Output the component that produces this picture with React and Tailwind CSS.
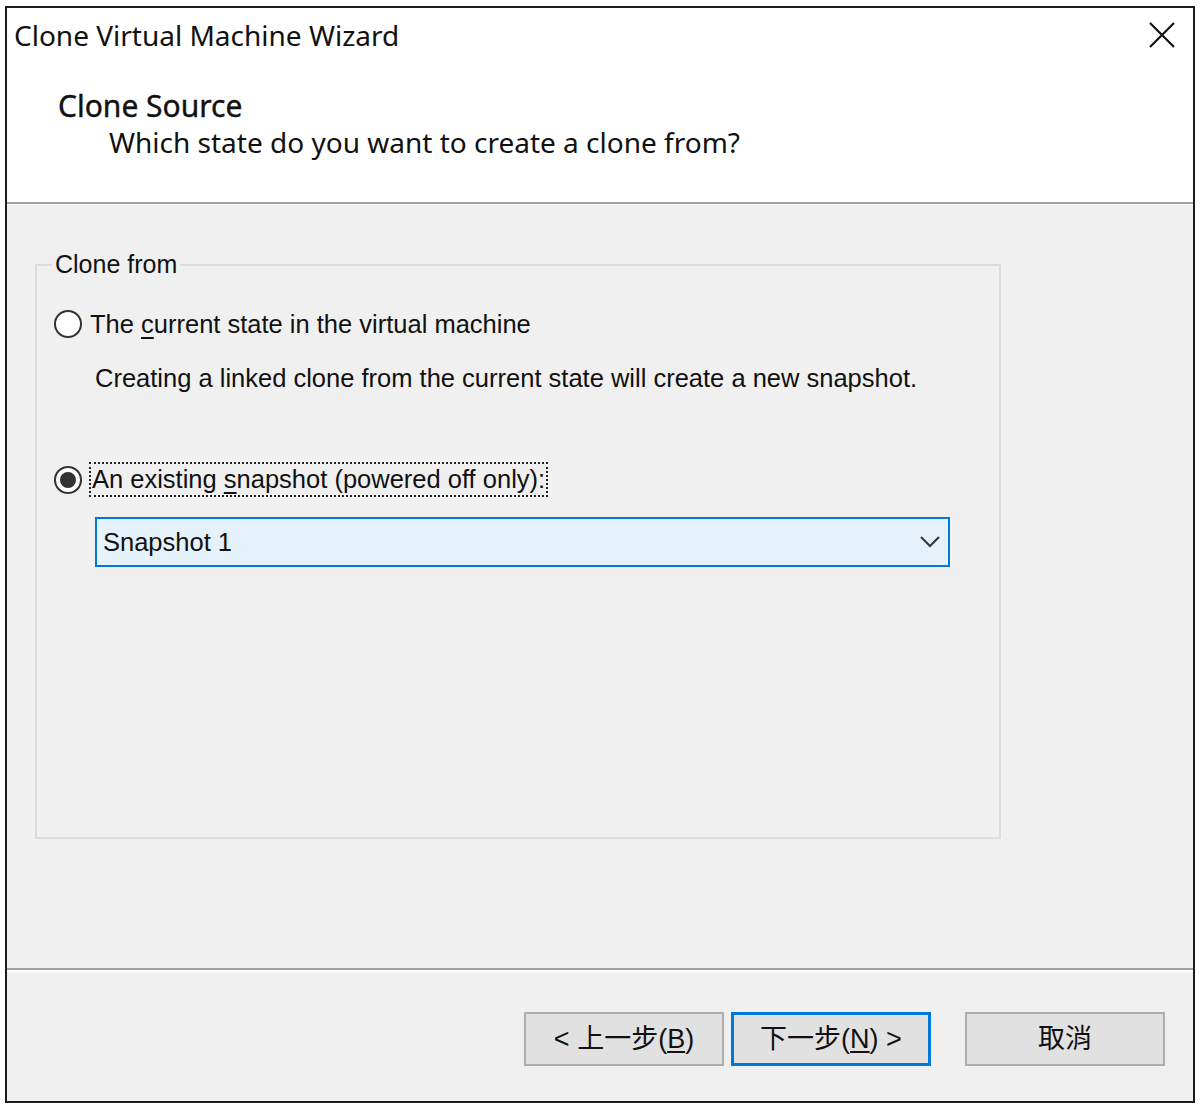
import React from "react";

const ui = { fontFamily: "'Noto Sans', 'Liberation Sans', sans-serif" };
const body = { fontFamily: "'Liberation Sans', 'Noto Sans CJK TC', sans-serif" };
const cjk = { fontFamily: "'Liberation Sans', 'Noto Sans CJK TC', sans-serif" };

function Radio({ checked }) {
  return (
    <span className="flex h-[28px] w-[28px] shrink-0 items-center justify-center rounded-full border-2 border-[#333] bg-white">
      {checked && <span className="h-[16px] w-[16px] rounded-full bg-[#333]" />}
    </span>
  );
}

function Button({ children, primary }) {
  return (
    <button
      className={
        primary
          ? "flex h-[54px] w-[200px] items-center justify-center border-[3px] border-[#0078d7] bg-[#e1e1e1] text-[27px] text-[#111]"
          : "flex h-[54px] w-[200px] items-center justify-center border-2 border-[#adadad] bg-[#e1e1e1] text-[27px] text-[#111]"
      }
      style={cjk}
    >
      {children}
    </button>
  );
}

export default function App() {
  return (
    <div className="min-h-[1108px] w-[1200px] bg-white pl-[5px] pt-[6px]">
      <div className="flex h-[1097px] w-[1190px] flex-col border-2 border-[#1c1c1c] bg-[#f0f0f0]">
        {/* header */}
        <div className="relative h-[194px] shrink-0 bg-white" style={ui}>
          <div className="pl-[7px] pt-[8px] text-[28px] leading-[38px] text-[#111]">Clone Virtual Machine Wizard</div>
          <button className="absolute right-[18px] top-[14px] h-[26px] w-[26px] text-[#111]">
            <svg viewBox="0 0 26 26" className="h-[26px] w-[26px]">
              <path d="M1 1 L25 25 M25 1 L1 25" stroke="#111" strokeWidth="2.2" fill="none" />
            </svg>
          </button>
          <div className="pl-[51px] pt-[34px] text-[30px] leading-[36px] text-[#111] [-webkit-text-stroke:0.4px_#111]">Clone Source</div>
          <div className="pl-[102px] text-[28px] leading-[36px] text-[#111]">Which state do you want to create a clone from?</div>
        </div>
        <div className="h-[2px] shrink-0 bg-[#a0a0a0]" />
        <div className="h-[1px] shrink-0 bg-white" />

        {/* body */}
        <div className="flex-1 pl-[28px] pt-[59px]" style={body}>
          <div className="relative h-[575px] w-[966px] border-2 border-[#dcdcdc]">
            <span className="absolute left-[15px] top-[-17px] bg-[#f0f0f0] px-[3px] text-[25px] leading-[30px] text-[#111]">
              Clone from
            </span>
            <div className="pl-[17px] pt-[43px]">
              <label className="flex items-center gap-[8px] text-[25.5px] leading-[30px] text-[#111]">
                <Radio />
                <span>
                  The <span className="underline underline-offset-[4px]">c</span>urrent state in the virtual machine
                </span>
              </label>
              <div className="pl-[41px] pt-[24px] text-[25.5px] leading-[30px] text-[#111]">
                Creating a linked clone from the current state will create a new snapshot.
              </div>
              <label className="mt-[69px] flex items-center gap-[7px] text-[25.5px] leading-[29px] text-[#111]">
                <Radio checked />
                <span className="border-2 border-dotted border-[#222] px-[1px] py-[1px]">
                  An existing <span className="underline underline-offset-[4px]">s</span>napshot (powered off only):
                </span>
              </label>
              <div className="ml-[41px] mt-[20px] flex h-[50px] w-[855px] items-center justify-between border-2 border-[#0078d7] bg-[#e5f1fb] pl-[6px] pr-[8px] text-[25.5px] text-[#111]">
                <span>Snapshot 1</span>
                <svg viewBox="0 0 20 12" className="h-[12px] w-[20px]">
                  <path d="M1 1 L10 10 L19 1" stroke="#333" strokeWidth="2" fill="none" />
                </svg>
              </div>
            </div>
          </div>
        </div>

        {/* footer */}
        <div className="h-[2px] shrink-0 bg-[#a0a0a0]" />
        <div className="h-[2px] shrink-0 bg-white" />
        <div className="flex h-[129px] shrink-0 items-start pl-[517px] pt-[40px]">
          <Button>
            &lt; 上一步(<span className="underline underline-offset-[3px]">B</span>)
          </Button>
          <div className="w-[7px]" />
          <Button primary>
            下一步(<span className="underline underline-offset-[3px]">N</span>) &gt;
          </Button>
          <div className="w-[34px]" />
          <Button>取消</Button>
        </div>
      </div>
    </div>
  );
}
